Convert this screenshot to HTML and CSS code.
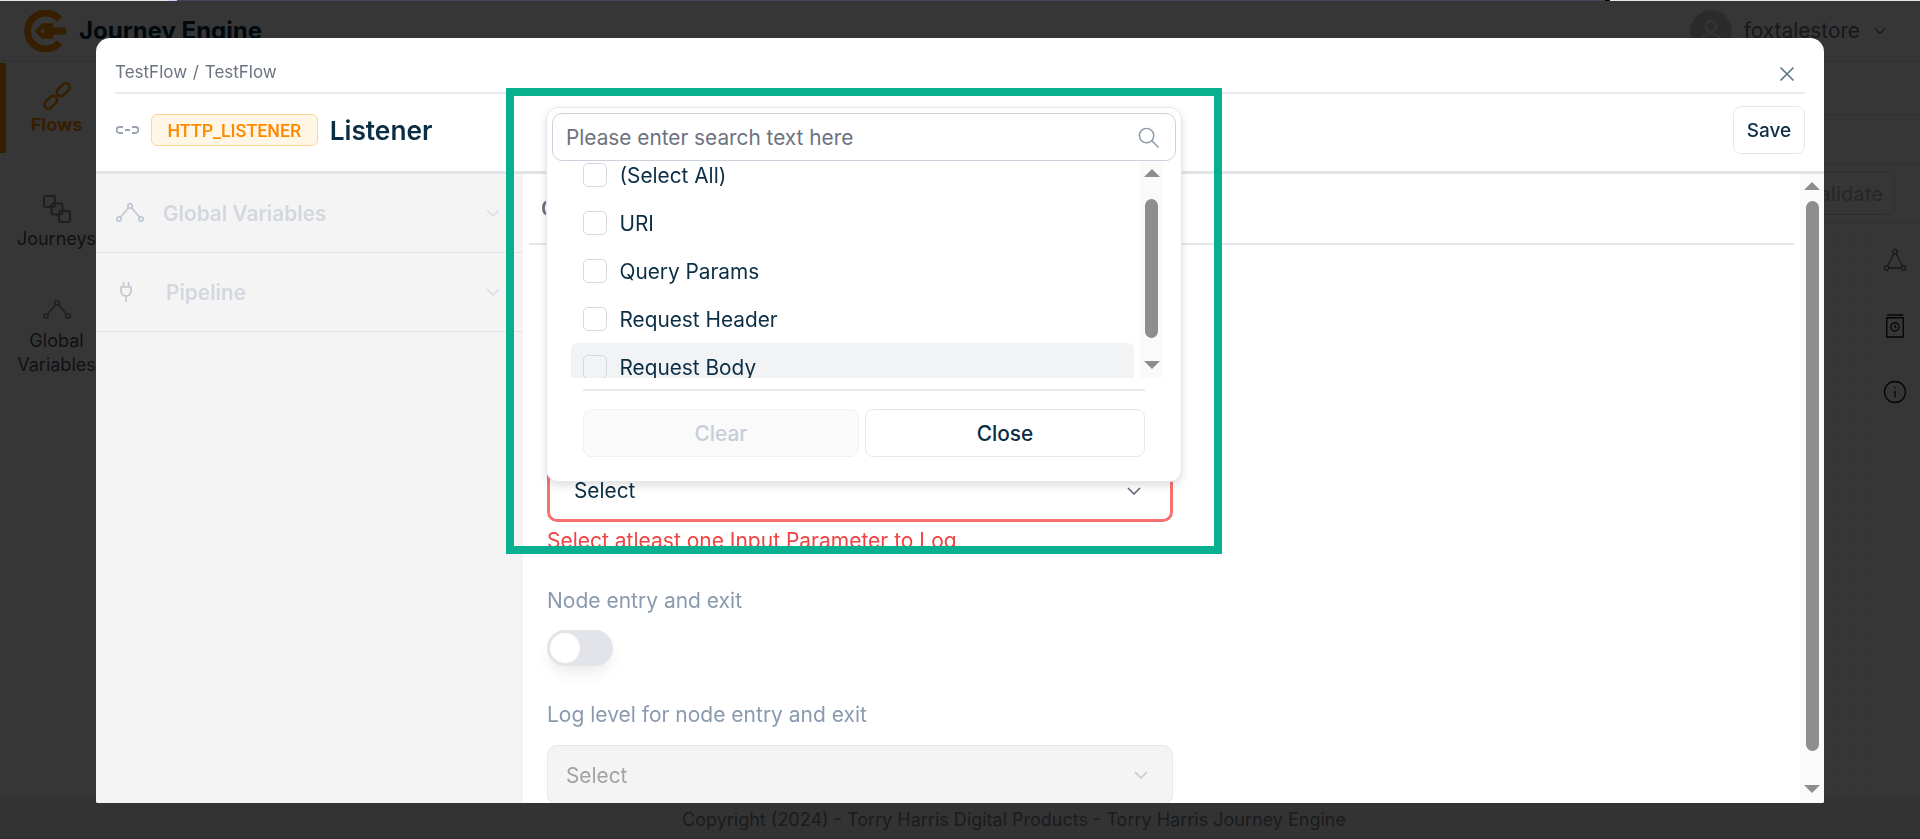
FILE: index.html
```html
<!DOCTYPE html>
<html lang="en">
<head>
<meta charset="utf-8">
<title>Journey Engine</title>
<link rel="stylesheet" href="styles.css">
</head>
<body>
<div class="app">
  <header class="topbar">
    <div class="brand">
      <svg class="logo" viewBox="0 0 42 42"><path d="M35.500 9.500 A18 18 0 1 0 35.500 32.500" fill="none" stroke="#ff8c00" stroke-width="7"/><path d="M29 15.500 H19 L13.500 21 L19 26.500 H29" fill="none" stroke="#ff8c00" stroke-width="4.500"/><path d="M20 21 H42" stroke="#ff8c00" stroke-width="7"/></svg>
      <span class="brand-name">Journey Engine</span>
    </div>
    <div class="user">
      <span class="avatar"><svg viewBox="0 0 24 24" width="28" height="28" fill="none" stroke="#fff" stroke-width="1.600"><circle cx="12" cy="8" r="4.500"/><path d="M4 22c0-5 4-8 8-8s8 3 8 8"/></svg></span>
      <span class="user-name">foxtalestore</span>
      <svg class="user-chev" viewBox="0 0 12 8" width="12" height="8"><path d="M1 1.500 L6 6.500 L11 1.500" fill="none" stroke="#6b7280" stroke-width="1.400"/></svg>
    </div>
  </header>
  <div class="workspace">
    <nav class="sidenav">
      <div class="navitem active">
        <svg viewBox="0 0 28 28" width="32" height="32" fill="none" stroke="#ff8c00" stroke-width="2.200"><rect x="-6.500" y="-3.500" width="13" height="7" rx="3.500" transform="translate(8.500 19.500) rotate(-45)"/><rect x="-6.500" y="-3.500" width="13" height="7" rx="3.500" transform="translate(19.500 8.500) rotate(-45)"/></svg>
        <span>Flows</span>
      </div>
      <div class="navitem journeys">
        <svg viewBox="0 0 28 28" width="28" height="28" fill="none" stroke="#8a929e" stroke-width="2"><rect x="1" y="1" width="11" height="11" rx="2"/><rect x="8.500" y="8.500" width="11" height="11" rx="2"/><rect x="16" y="16" width="11" height="11" rx="2"/></svg>
        <span>Journeys</span>
      </div>
      <div class="navitem globals">
        <svg viewBox="0 0 28 20" width="28" height="20" fill="none" stroke="#8a929e" stroke-width="1.600"><circle cx="14" cy="3" r="2.200"/><circle cx="3" cy="16" r="2.200"/><circle cx="25" cy="16" r="2.200"/><path d="M12.600 4.700 L4.400 14.300 M15.400 4.700 L23.600 14.300"/></svg>
        <span>Global<br>Variables</span>
      </div>
    </nav>
    <main class="content">
      <div class="toolrow short"></div>
      <div class="toolrow mid"></div>
      <div class="toolrow action"><button class="validate">Validate</button></div>
      <div class="stage">
        <div class="canvas"></div>
        <aside class="rail">
          <svg viewBox="0 0 24 24" width="24" height="24" fill="none" stroke="#6b7280" stroke-width="1.300"><circle cx="12" cy="3.500" r="2.200"/><circle cx="3.500" cy="20" r="2.200"/><circle cx="20.500" cy="20" r="2.200"/><path d="M11 5.500 L4.500 18 M13 5.500 L19.500 18 M5.700 20 H18.300"/></svg>
          <svg viewBox="0 0 24 26" width="22" height="26" fill="none" stroke="#111827" stroke-width="1.500"><path d="M3 1 H21 M3 4 H21 V25 H3 Z"/><circle cx="12" cy="14" r="4.500"/><path d="M12 12 V14 L13.500 15"/></svg>
          <svg viewBox="0 0 24 24" width="24" height="24" fill="none" stroke="#111827" stroke-width="1.300"><circle cx="12" cy="12" r="10.500"/><path d="M12 10.500 V17.500 M12 6.800 V8.300"/></svg>
        </aside>
      </div>
    </main>
  </div>
  <footer class="copyright">Copyright (2024) - Torry Harris Digital Products - Torry Harris Journey Engine</footer>
</div>

<div class="overlay"></div>
<div class="topstrip"></div>

<section class="modal">
  <div class="crumbs">
    <span>TestFlow&nbsp;/&nbsp;TestFlow</span>
    <svg class="close" viewBox="0 0 16 16" width="16" height="16"><path d="M1.500 1.500 L14.500 14.500 M14.500 1.500 L1.500 14.500" stroke="#5b7a8c" stroke-width="1.700" fill="none"/></svg>
  </div>
  <div class="titlebar">
    <svg class="node-icon" viewBox="0 0 23 8" width="23" height="8" fill="none" stroke="#98a4b3" stroke-width="1.900"><path d="M7 1 H3.500 A3 3 0 0 0 3.500 7 H7 M16 1 H19.500 A3 3 0 0 1 19.500 7 H16 M9 4 H14"/></svg>
    <span class="tag">HTTP_LISTENER</span>
    <h1 class="title">Listener</h1>
    <button class="save">Save</button>
  </div>
  <div class="modal-body">
    <aside class="panel">
      <div class="panel-row">
        <svg class="panel-icon" viewBox="0 0 28 20" width="28" height="20" fill="none" stroke="#bfc8d2" stroke-width="1.700"><circle cx="14" cy="3" r="2.200"/><circle cx="3" cy="16" r="2.200"/><circle cx="25" cy="16" r="2.200"/><path d="M12.600 4.700 L4.400 14.300 M15.400 4.700 L23.600 14.300"/></svg>
        <span class="panel-label">Global Variables</span>
        <svg class="panel-chev" viewBox="0 0 14 8" width="14" height="8"><path d="M1 1 L7 7 L13 1" fill="none" stroke="#dcdfe4" stroke-width="1.500"/></svg>
      </div>
      <div class="panel-row">
        <svg class="panel-icon plug" viewBox="0 0 12 20" width="12" height="20" fill="none" stroke="#bfc8d2" stroke-width="1.700"><path d="M3.500 0 V5 M8.500 0 V5 M1 5 H11 V9 A5 5 0 0 1 1 9 Z M6 14 V20"/></svg>
        <span class="panel-label">Pipeline</span>
        <svg class="panel-chev" viewBox="0 0 14 8" width="14" height="8"><path d="M1 1 L7 7 L13 1" fill="none" stroke="#dcdfe4" stroke-width="1.500"/></svg>
      </div>
    </aside>
    <div class="detail">
      <div class="tabs"><span class="tab">C</span></div>
      <div class="form">
        <div class="select error"><span>Select</span><svg viewBox="0 0 14 8" width="14" height="8"><path d="M1 1 L7 7 L13 1" fill="none" stroke="#5f6b7a" stroke-width="1.600"/></svg></div>
        <p class="error-text">Select atleast one Input Parameter to Log</p>
        <label class="field-label">Node entry and exit</label>
        <div class="toggle"><span class="knob"></span></div>
        <label class="field-label">Log level for node entry and exit</label>
        <div class="select disabled"><span>Select</span><svg viewBox="0 0 14 8" width="14" height="8"><path d="M1 1 L7 7 L13 1" fill="none" stroke="#c4c8ce" stroke-width="1.500"/></svg></div>
      </div>
    </div>
    <div class="scrollbar main-scroll">
      <svg class="arrow" viewBox="0 0 16 8" width="16" height="8"><polygon points="8,0 16,8 0,8" fill="#8e8e8e"/></svg>
      <span class="thumb"></span>
      <svg class="arrow" viewBox="0 0 16 8" width="16" height="8"><polygon points="0,0 16,0 8,8" fill="#8e8e8e"/></svg>
    </div>
  </div>

  <div class="popup">
    <div class="search">
      <span class="placeholder">Please enter search text here</span>
      <svg viewBox="0 0 24 24" width="23" height="23" fill="none" stroke="#8b98a8" stroke-width="1.500"><circle cx="10" cy="10" r="7.500"/><path d="M15.500 15.500 L22.500 22.500"/></svg>
    </div>
    <div class="list-wrap">
      <ul class="options">
        <li class="option"><span class="check"></span>(Select All)</li>
        <li class="option"><span class="check"></span>URI</li>
        <li class="option"><span class="check"></span>Query Params</li>
        <li class="option"><span class="check"></span>Request Header</li>
        <li class="option hover"><span class="check"></span>Request Body</li>
      </ul>
      <div class="scrollbar list-scroll">
        <svg class="arrow" viewBox="0 0 16 8" width="16" height="8"><polygon points="8,0 16,8 0,8" fill="#8e8e8e"/></svg>
        <span class="thumb"></span>
        <svg class="arrow" viewBox="0 0 16 8" width="16" height="8"><polygon points="0,0 16,0 8,8" fill="#8e8e8e"/></svg>
      </div>
    </div>
    <div class="popup-foot">
      <button class="btn clear">Clear</button>
      <button class="btn closebtn">Close</button>
    </div>
  </div>
</section>

<div class="highlight"></div>
</body>
</html>
```
FILE: styles.css
```css
* { box-sizing: border-box; }
html, body { margin: 0; height: 100%; overflow: hidden; }
body { font-family: Inter, "Liberation Sans", sans-serif; color: #0b2e45; background: #fff; }

/* background application */
.app { display: flex; flex-direction: column; height: 839px; }
.topbar { height: 62px; flex: none; display: flex; align-items: center; justify-content: space-between; padding: 0 34px 0 24px; border-bottom: 1px solid #e5e7eb; }
.brand { display: flex; align-items: center; gap: 13px; }
.logo { width: 42px; height: 42px; }
.brand-name { font-size: 24px; font-weight: 700; color: #002b45; }
.user { display: flex; align-items: center; }
.avatar { width: 42px; height: 42px; border-radius: 50%; background: #c8ccd2; display: flex; align-items: center; justify-content: center; margin-right: 12px; }
.user-name { font-size: 20.800px; color: #6b7280; margin-right: 14px; }
.workspace { flex: 1; display: flex; min-height: 0; }
.sidenav { width: 113px; flex: none; padding-top: 1px; display: flex; flex-direction: column; }
.navitem { display: flex; flex-direction: column; align-items: center; font-size: 18px; line-height: 24px; text-align: center; color: #4b5563; }
.navitem.active { height: 90px; padding: 17px 6px 0 0; gap: 1px; font-weight: 700; color: #ff8c00; border-left: 6px solid #ff8c00; }
.navitem.journeys { height: 102px; padding-top: 42px; gap: 4px; }
.navitem.globals { padding-top: 45px; gap: 9px; }
.content { flex: 1; display: flex; flex-direction: column; min-width: 0; }
.toolrow { flex: none; border-bottom: 1px solid #e5e7eb; }
.toolrow.short { height: 53px; }
.toolrow.mid { height: 49px; }
.toolrow.action { height: 59px; display: flex; align-items: center; justify-content: flex-end; padding-right: 25px; }
.validate { width: 195px; height: 44px; border: 1px solid #d8dade; border-radius: 8px; background: #fff; color: #b9bdc4; font: 500 20px Inter, sans-serif; text-align: right; padding: 2px 11px 0; }
.stage { flex: 1; display: flex; min-height: 0; }
.canvas { flex: 1; background-image: radial-gradient(circle, #cfd2d6 .8px, transparent 1.100px); background-size: 13.500px 13.500px; background-position: 3px 3px; }
.rail { width: 50px; flex: none; display: flex; flex-direction: column; align-items: center; gap: 41px; padding-top: 25px; }
.copyright { height: 41px; flex: none; background: #efefef; color: #7a8390; font-size: 18px; display: flex; align-items: center; justify-content: center; padding: 2px 0 0 108px; }

.overlay { position: fixed; inset: 0; background: rgba(0, 0, 0, .79); }
.topstrip { position: fixed; left: 0; top: 0; width: 100%; height: 1px; background: linear-gradient(90deg, #e8e8e8 0 165px, #d7c6f2 171px 177px, #4b4358 177px 1605px, #000 1605px 1610px, #e8e8e8 1610px); }

/* modal */
.modal { position: fixed; left: 96px; top: 38px; width: 1728px; height: 765px; background: #fff; border-radius: 14px 14px 2px 2px; overflow: hidden; display: flex; flex-direction: column; }
.crumbs { height: 56px; flex: none; margin: 0 19px 0 19px; border-bottom: 2px solid #e9eaee; display: flex; align-items: center; justify-content: space-between; font-size: 17px; color: #6b7280; padding-top: 13px; word-spacing: 1px; }
.close { margin-right: 10px; margin-top: 5px; }
.titlebar { height: 80px; flex: none; border-bottom: 3px solid #e3e4e8; display: flex; align-items: center; padding: 0 19px 5px 20px; }
.node-icon { margin-right: 12px; }
.tag { height: 32px; display: flex; align-items: center; padding: 0 15.500px; border: 1px solid #ffd596; border-radius: 6px; background: #fff6e6; color: #ff8800; font: 500 17.800px Roboto, sans-serif; margin-right: 12px; }
.title { margin: 0; font-size: 26.300px; font-weight: 600; color: #0b2e45; }
.save { margin-left: auto; width: 72px; height: 48px; border: 1px solid #e5e7eb; border-radius: 8px; background: #fff; color: #0b2e45; font: 500 19px Inter, sans-serif; padding: 0; }
.modal-body { flex: 1; display: flex; min-height: 0; }
.panel { width: 427px; flex: none; background: #f4f4f4; }
.panel-row { height: 79px; display: flex; align-items: center; padding: 0 22px 0 20px; border-bottom: 1px solid #e3e5e8; }
.panel-icon { margin-right: 19px; }
.panel-icon.plug { margin-left: 4px; margin-right: 34px; }
.panel-label { font-size: 20.800px; font-weight: 600; color: #d3d7de; }
.panel-chev { margin-left: auto; margin-right: 1px; }
.detail { flex: 1; min-width: 0; margin: 0 6px; display: flex; flex-direction: column; }
.tabs { height: 71px; flex: none; border-bottom: 2px solid #e5e6ea; display: flex; align-items: center; padding-left: 12px; }
.tab { font-size: 20.800px; font-weight: 600; color: #6b7280; }
.form { padding: 217px 0 0 18px; width: 644px; }
.field-label { display: block; font-size: 21px; line-height: 24px; color: #8a9aae; }
.select { height: 60px; border-radius: 10px; margin-top: 18px; display: flex; align-items: center; justify-content: space-between; font-size: 20.800px; }
.select.error { border: 3px solid #f87171; padding: 0 29px 3px 24px; color: #0b2e45; margin-top: 0; }
.select.disabled { background: #f4f4f4; border: 1px solid #e5e7eb; padding: 0 24px 0 18px; color: #a3a3a3; }
.error-text { margin: 7px 0 36px; font-size: 21px; line-height: 24px; color: #ef4444; }
.toggle { width: 66px; height: 36px; border-radius: 18px; background: #e2e4e9; margin: 17px 0 37px; padding: 3px; box-shadow: 0 10px 15px -3px rgba(0, 0, 0, .08); }
.knob { display: block; width: 30px; height: 30px; border-radius: 50%; background: #fff; }
.scrollbar { display: flex; flex-direction: column; align-items: center; background: #fafafa; flex: none; }
.thumb { display: block; background: #8e8e8e; border-radius: 7px; width: 13px; }
.main-scroll { width: 24px; padding: 8px 0 10px; }
.main-scroll .thumb { height: 550px; margin: 11px 0 auto; }

/* popup */
.popup { position: absolute; left: 450px; top: 69px; width: 636px; height: 375px; background: #fff; border: 1px solid #e5e7eb; border-radius: 12px; box-shadow: 0 4px 8px rgba(0, 0, 0, .12); padding: 5px; display: flex; flex-direction: column; }
.search { height: 48px; flex: none; border: 1px solid #cbd2db; border-radius: 10px; display: flex; align-items: center; justify-content: space-between; padding: 0 15px 0 13px; background: #fff; position: relative; z-index: 1; }
.placeholder { font-size: 20.800px; color: #6b7280; }
.list-wrap { height: 217px; flex: none; display: flex; overflow: hidden; padding-left: 19px; }
.options { list-style: none; margin: -10px 0 0; padding: 0; width: 563px; flex: none; }
.option { height: 48px; display: flex; align-items: center; gap: 12.500px; padding-left: 12px; font-size: 20.800px; color: #0b2e45; border-radius: 6px; }
.option.hover { background: #f2f3f5; }
.check { width: 24px; height: 24px; border: 1px solid #d5d9df; border-radius: 5px; background: #fff; flex: none; }
.option.hover .check { background: transparent; }
.list-scroll { width: 23px; margin-left: 6px; padding: 8px 0 9px; }
.list-scroll .thumb { height: 139px; margin: 22px 0 auto; }
.popup-foot { margin: 11px 31px 0; padding-top: 18px; border-top: 2px solid #e9eaee; display: flex; gap: 6px; }
.btn { height: 48px; border-radius: 8px; font: 500 20.800px Inter, sans-serif; padding: 0; }
.clear { width: 276px; background: #fafafa; border: 1px solid #f0f1f3; color: #c7ced7; }
.closebtn { width: 280px; background: #fff; border: 1px solid #e5e7eb; color: #0b2e45; }

.highlight { position: fixed; left: 506px; top: 88px; width: 716px; height: 466px; border: 8px solid #08b08f; }
```
